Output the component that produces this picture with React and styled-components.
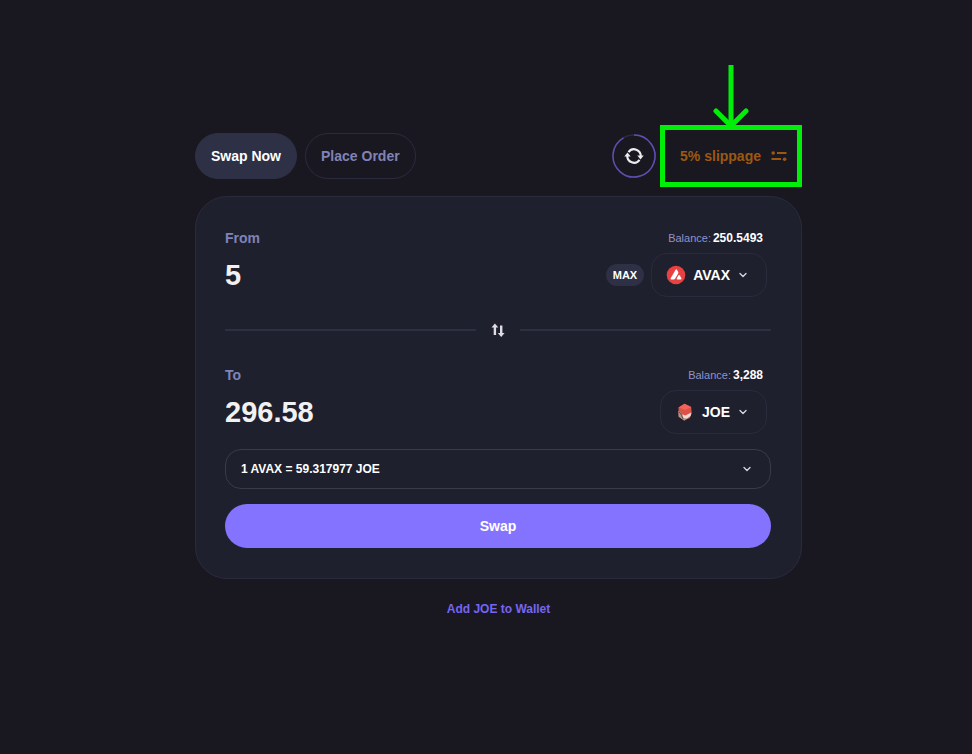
import { useState } from "react";
import styled, { createGlobalStyle } from "styled-components";

const GlobalStyle = createGlobalStyle`
  * {
    box-sizing: border-box;
  }
  body {
    margin: 0;
    background-color: #191820;
    color: #fff;
    font-family: "Liberation Sans", Arial, sans-serif;
  }
  button, input {
    font-family: inherit;
    color: inherit;
    border: 0;
    background: none;
    padding: 0;
  }
  button {
    cursor: pointer;
  }
  svg {
    display: block;
    flex-shrink: 0;
  }
`;

const Page = styled.main`
  padding: 125px 0 40px 25px;
`;

const Center = styled.div`
  max-width: 607px;
  margin: 0 auto;
`;

const Header = styled.header`
  display: flex;
  align-items: center;
  justify-content: space-between;
  margin-bottom: 9px;
`;

const Group = styled.div`
  display: flex;
  align-items: center;
  gap: ${(props) => props.$gap}px;
`;

const Tab = styled.button`
  height: 46px;
  padding: 0 15px;
  border: 1px solid #2b2b3f;
  border-radius: 23px;
  font-size: 14px;
  font-weight: 700;
  ${(props) =>
    props.$active
      ? `
    background-color: #2e3045;
    border-color: #2e3045;
  `
      : `
    color: #8083b8;
  `}
`;

const RefreshButton = styled.button`
  width: 44px;
  height: 44px;
`;

const Highlight = styled.div`
  position: relative;
  border: 5px solid #00ee08;
`;

const ArrowMark = styled.svg`
  position: absolute;
  left: 50%;
  bottom: 100%;
  transform: translateX(-50%);
`;

const SlippageButton = styled.button`
  display: flex;
  align-items: center;
  gap: 10px;
  height: 52px;
  padding: 0 10px 0 15px;
  color: #9c5813;
  font-size: 14px;
  font-weight: 700;
`;

const Panel = styled.section`
  padding: 30px 30px 30px 29px;
  background-color: #1f202d;
  border: 1px solid #2a2a3d;
  border-radius: 32px;
`;

const Row = styled.div`
  display: flex;
  align-items: center;
  justify-content: space-between;
  padding-right: 4px;
`;

const LabelRow = styled(Row)`
  height: 22px;
  margin-bottom: 4px;
  padding-right: 8px;
`;

const Label = styled.label`
  color: #8083b8;
  font-size: 14px;
  font-weight: 700;
`;

const Balance = styled.span`
  display: flex;
  align-items: baseline;
  gap: 2px;
  color: #8f92cc;
  font-size: 11px;
  b {
    color: #fff;
    font-size: 12px;
  }
`;

const Amount = styled.input`
  flex: 1;
  min-width: 0;
  height: 44px;
  color: #f1f1f4;
  font-size: 29px;
  font-weight: 700;
  outline: none;
`;

const MaxButton = styled.button`
  height: 22px;
  padding: 0 7px;
  border-radius: 11px;
  background-color: #2e3045;
  font-size: 11px;
  font-weight: 700;
`;

const TokenButton = styled.button`
  display: flex;
  align-items: center;
  height: 44px;
  padding: 0 19px 0 14px;
  border: 1px solid #2a2a3d;
  border-radius: 16px;
  font-size: 14px;
  font-weight: 700;
`;

const TokenSymbol = styled.span`
  margin: 0 9px 0 7px;
`;

const Divider = styled.div`
  display: flex;
  align-items: center;
  gap: 14px;
  margin: 25px 0 26px;
  &::before,
  &::after {
    content: "";
    flex: 1;
    height: 2px;
    background-color: #2e2f42;
  }
`;

const SwitchButton = styled.button`
  width: 16px;
  height: 16px;
`;

const RateButton = styled.button`
  display: flex;
  align-items: center;
  justify-content: space-between;
  width: 100%;
  height: 40px;
  margin: 15px 0;
  padding: 0 19px 0 15px;
  border: 1px solid #3a3a48;
  border-radius: 16px;
  font-size: 12px;
  font-weight: 700;
`;

const SwapButton = styled.button`
  display: block;
  width: 100%;
  height: 44px;
  border-radius: 22px;
  background-color: #8473ff;
  font-size: 14px;
  font-weight: 700;
`;

const Footer = styled.footer`
  margin-top: 19px;
  text-align: center;
  line-height: 20px;
`;

const WalletLink = styled.a`
  color: #7665f2;
  font-size: 12px;
  font-weight: 700;
  text-decoration: none;
`;

function RefreshIcon() {
  return (
    <svg width="44" height="44" viewBox="0 0 44 44" fill="none">
      <circle cx="22" cy="22" r="21" stroke="#2b2b3f" strokeWidth="1.5" />
      <path
        d="M22 1A21 21 0 1 1 11.5 3.8"
        stroke="#5d4fb0"
        strokeWidth="1.5"
      />
      <path
        d="M16.500 18.200A6.700 6.700 0 0 1 28.700 22.500M27.500 25.800A6.700 6.700 0 0 1 15.300 21.500"
        stroke="#ececf0"
        strokeWidth="2.100"
      />
      <path
        d="M25.300 21.600h6.400l-3.200 4zM12.300 22.400h6.400l-3.200-4z"
        fill="#ececf0"
      />
    </svg>
  );
}

function SlidersIcon() {
  return (
    <svg width="16" height="12" viewBox="0 0 16 12" fill="currentColor">
      <circle cx="2.200" cy="3" r="1.800" />
      <path d="M6 2h9.500v2H6zM.5 8H10v2H.5z" />
      <circle cx="13.600" cy="9.200" r="1.800" />
    </svg>
  );
}

function SwitchIcon() {
  return (
    <svg width="16" height="16" viewBox="0 0 16 16" fill="#dcdce2">
      <path d="M4.900 1.500L8.300 5.500H6.100v7.500H3.700V5.500H1.500z" />
      <path d="M11.200 15L7.800 11h2.200V3.500h2.400V11h2.200z" />
    </svg>
  );
}

function ChevronIcon() {
  return (
    <svg width="8" height="8" viewBox="0 0 8 8" fill="none">
      <path
        d="M1 2.500l3 3 3-3"
        stroke="#d4d4dc"
        strokeWidth="1.400"
        strokeLinecap="round"
        strokeLinejoin="round"
      />
    </svg>
  );
}

function AvaxLogo() {
  return (
    <svg width="20" height="20" viewBox="0 0 20 20">
      <circle cx="10" cy="10" r="9.300" fill="#e84142" />
      <path
        d="M9.600 4.700q.7-1.100 1.400 0l1.200 2.200q.4.800 0 1.600l-3 5q-.5.900-1.500.9H5.300q-1.200 0-.6-1.100z"
        fill="#fff"
      />
      <path
        d="M12.400 10.600q.7-1.100 1.400 0l1.600 2.700q.6 1.100-.6 1.100h-3.400q-1.200 0-.6-1.100z"
        fill="#fff"
      />
    </svg>
  );
}

function JoeLogo() {
  return (
    <svg width="20" height="20" viewBox="0 0 20 20">
      <path d="M3.500 5.500L9.500 1.800l6.700 3.100.5 6.600-1.900 4.500-5.600 2.400-5.500-3.600z" fill="#dc5148" />
      <path d="M3.500 5.500L9.500 1.800l6.700 3.100-6 3.100z" fill="#f2635a" />
      <path d="M3.300 8.800l2.200 1.400 1.700 3 3 1.300.6 3.200-1.600.7-5.500-3.600z" fill="#b09a8e" />
      <path d="M7.200 12.200l3.200 1.300 5.900-3.100-.7 3.700-3.900 2.600-3.300-1z" fill="#e9dcd2" />
      <path d="M4.200 9.800l2.300 3.500 1.500 3.600" stroke="#70453f" strokeWidth="1" fill="none" />
    </svg>
  );
}

function TokenField({ id, label, balance, value, onChange, symbol, logo, max }) {
  return (
    <div>
      <LabelRow>
        <Label htmlFor={id}>{label}</Label>
        <Balance>
          Balance: <b>{balance}</b>
        </Balance>
      </LabelRow>
      <Row>
        <Amount
          id={id}
          value={value}
          inputMode="decimal"
          onChange={(ev) => onChange(ev.target.value)}
        />
        <Group $gap={7}>
          {max && <MaxButton type="button">MAX</MaxButton>}
          <TokenButton type="button">
            {logo}
            <TokenSymbol>{symbol}</TokenSymbol>
            <ChevronIcon />
          </TokenButton>
        </Group>
      </Row>
    </div>
  );
}

export default function App() {
  const [tab, setTab] = useState("swap");
  const [from, setFrom] = useState("5");
  const [to, setTo] = useState("296.58");

  return (
    <Page>
      <GlobalStyle />
      <Center>
        <Header>
          <Group $gap={8}>
            <Tab type="button" $active={tab === "swap"} onClick={() => setTab("swap")}>
              Swap Now
            </Tab>
            <Tab type="button" $active={tab === "order"} onClick={() => setTab("order")}>
              Place Order
            </Tab>
          </Group>
          <Group $gap={4}>
            <RefreshButton type="button" aria-label="Refresh">
              <RefreshIcon />
            </RefreshButton>
            <Highlight>
              <ArrowMark width="36" height="65" viewBox="0 0 36 65" fill="none">
                <path d="M18 0v61" stroke="#00ee08" strokeWidth="5" />
                <path
                  d="M3 46l15 15 15-15"
                  stroke="#00ee08"
                  strokeWidth="5"
                  strokeLinecap="round"
                />
              </ArrowMark>
              <SlippageButton type="button">
                5% slippage
                <SlidersIcon />
              </SlippageButton>
            </Highlight>
          </Group>
        </Header>
        <Panel>
          <TokenField
            id="from"
            label="From"
            balance="250.5493"
            value={from}
            onChange={setFrom}
            symbol="AVAX"
            logo={<AvaxLogo />}
            max
          />
          <Divider>
            <SwitchButton type="button" aria-label="Switch tokens">
              <SwitchIcon />
            </SwitchButton>
          </Divider>
          <TokenField
            id="to"
            label="To"
            balance="3,288"
            value={to}
            onChange={setTo}
            symbol="JOE"
            logo={<JoeLogo />}
          />
          <RateButton type="button">
            1 AVAX = 59.317977 JOE
            <ChevronIcon />
          </RateButton>
          <SwapButton type="button">Swap</SwapButton>
        </Panel>
        <Footer>
          <WalletLink href="#wallet">Add JOE to Wallet</WalletLink>
        </Footer>
      </Center>
    </Page>
  );
}
